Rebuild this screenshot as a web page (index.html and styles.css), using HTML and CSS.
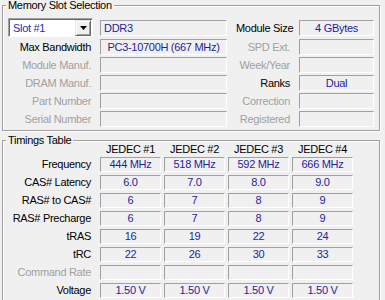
FILE: index.html
```html
<!DOCTYPE html>
<html>
  <head>
    <link rel="stylesheet" href="styles.css">
  </head>
  <body>
    <div class="window">
      <div class="group slot-group">
        <span class="group-title">Memory Slot Selection</span>
        <div class="slot-grid">
          <div class="combo">
            <span class="combo-text">Slot #1</span>
            <span class="combo-btn">
              <svg width="7" height="4" viewBox="0 0 7 4"><polygon points="0,0 7,0 3.5,4" fill="#000"/></svg>
            </span>
          </div>
          <div class="field text-left">DDR3</div>
          <div class="label">Module Size</div>
          <div class="field">4 GBytes</div>

          <div class="label">Max Bandwidth</div>
          <div class="field">PC3-10700H (667 MHz)</div>
          <div class="label off">SPD Ext.</div>
          <div class="field"></div>

          <div class="label off">Module Manuf.</div>
          <div class="field"></div>
          <div class="label off">Week/Year</div>
          <div class="field"></div>

          <div class="label off">DRAM Manuf.</div>
          <div class="field"></div>
          <div class="label">Ranks</div>
          <div class="field">Dual</div>

          <div class="label off">Part Number</div>
          <div class="field"></div>
          <div class="label off">Correction</div>
          <div class="field"></div>

          <div class="label off">Serial Number</div>
          <div class="field"></div>
          <div class="label off">Registered</div>
          <div class="field"></div>
        </div>
      </div>

      <div class="group timing-group">
        <span class="group-title">Timings Table</span>
        <div class="timing-grid">
          <div></div>
          <div class="head">JEDEC #1</div>
          <div class="head">JEDEC #2</div>
          <div class="head">JEDEC #3</div>
          <div class="head">JEDEC #4</div>

          <div class="tlabel">Frequency</div>
          <div class="field">444 MHz</div>
          <div class="field">518 MHz</div>
          <div class="field">592 MHz</div>
          <div class="field">666 MHz</div>

          <div class="tlabel">CAS# Latency</div>
          <div class="field">6.0</div>
          <div class="field">7.0</div>
          <div class="field">8.0</div>
          <div class="field">9.0</div>

          <div class="tlabel">RAS# to CAS#</div>
          <div class="field">6</div>
          <div class="field">7</div>
          <div class="field">8</div>
          <div class="field">9</div>

          <div class="tlabel">RAS# Precharge</div>
          <div class="field">6</div>
          <div class="field">7</div>
          <div class="field">8</div>
          <div class="field">9</div>

          <div class="tlabel">tRAS</div>
          <div class="field">16</div>
          <div class="field">19</div>
          <div class="field">22</div>
          <div class="field">24</div>

          <div class="tlabel">tRC</div>
          <div class="field">22</div>
          <div class="field">26</div>
          <div class="field">30</div>
          <div class="field">33</div>

          <div class="tlabel off">Command Rate</div>
          <div class="field"></div>
          <div class="field"></div>
          <div class="field"></div>
          <div class="field"></div>

          <div class="tlabel">Voltage</div>
          <div class="field">1.50 V</div>
          <div class="field">1.50 V</div>
          <div class="field">1.50 V</div>
          <div class="field">1.50 V</div>
        </div>
      </div>
    </div>
  </body>
</html>
```

FILE: styles.css
```css
* {
  box-sizing: border-box;
}

body {
  margin: 0;
  width: 385px;
  height: 300px;
  overflow: hidden;
  background: #f0f0f0;
  font-family: "Liberation Sans", Arial, sans-serif;
  font-size: 11px;
  letter-spacing: -0.3px;
  color: #000;
}

.window {
  padding: 5px 5px 0 2px;
}

.group {
  position: relative;
  border: solid 1px #a0a0a0;
  box-shadow: inset 1px 1px 0 #fff, 1px 1px 0 #fff;
}

.group-title {
  position: absolute;
  top: -8px;
  left: 3px;
  padding: 0 2px;
  line-height: 14px;
  background: #f0f0f0;
}

.slot-group {
  height: 126px;
  padding: 12px 0 0 5px;
}

.slot-grid {
  display: grid;
  grid-template-columns: 83px 127px 54px 75px;
  grid-template-rows: 19px repeat(5, 16px);
  column-gap: 9px;
  row-gap: 2px;
}

.label {
  text-align: right;
  align-self: center;
  line-height: 14px;
  white-space: nowrap;
}

.off {
  color: #a0a0a0;
}

.field {
  height: 16px;
  align-self: center;
  border: solid 1px;
  border-color: #a0a0a0 #fff #fff #a0a0a0;
  color: #1e1e9e;
  text-align: center;
  line-height: 14px;
  white-space: nowrap;
  overflow: hidden;
}

.text-left {
  text-align: left;
  padding-left: 3px;
}

.combo {
  width: 85px;
  height: 19px;
  display: flex;
  align-items: center;
  background: #fff;
  border: solid 1px;
  border-color: #a0a0a0 #fff #fff #a0a0a0;
  box-shadow: inset 1px 1px 0 #696969;
  padding: 1px 1px 1px 4px;
}

.combo-text {
  flex: 1;
  color: #2c2ca8;
  line-height: 14px;
}

.combo-btn {
  width: 16px;
  height: 16px;
  display: flex;
  align-items: center;
  justify-content: center;
  background: #f0f0f0;
  border: solid 1px;
  border-color: #e3e3e3 #696969 #696969 #e3e3e3;
  box-shadow: inset 1px 1px 0 #fff, inset -1px -1px 0 #a0a0a0;
}

.combo-btn svg {
  display: block;
}

.timing-group {
  margin-top: 9px;
  height: 170px;
  padding: 0 0 0 5px;
}

.timing-grid {
  display: grid;
  grid-template-columns: 89px repeat(4, 61px);
  grid-template-rows: 13px repeat(8, 15px);
  column-gap: 3px;
  row-gap: 3px;
}

.timing-grid .field {
  height: 15px;
  line-height: 13px;
}

.head {
  text-align: center;
  line-height: 17px;
  white-space: nowrap;
}

.tlabel {
  text-align: right;
  padding-right: 6px;
  line-height: 15px;
  white-space: nowrap;
}
```
